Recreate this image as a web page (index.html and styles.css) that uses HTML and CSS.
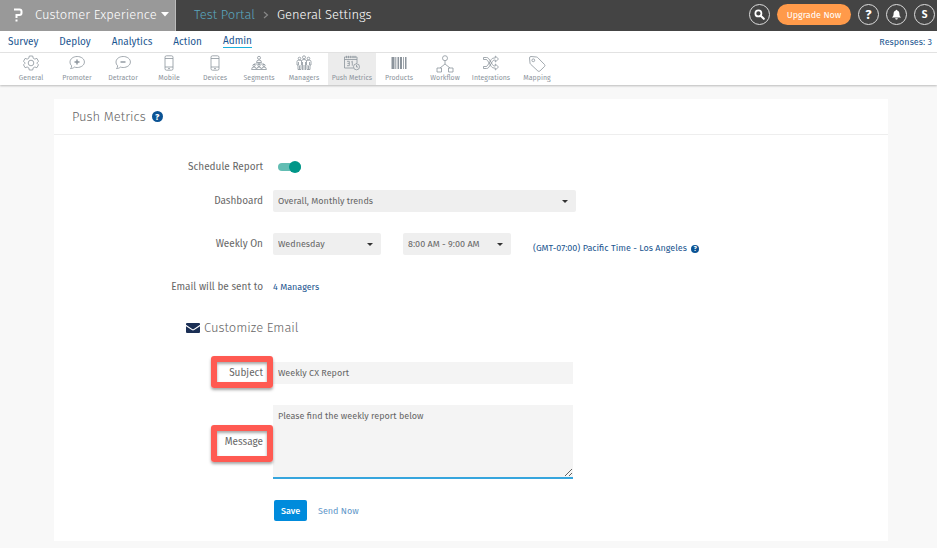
FILE: index.html
```html
<!DOCTYPE html>
<html lang="en">
<head>
    <meta charset="UTF-8">
    <meta name="viewport" content="width=device-width, initial-scale=1.0">
    <title>Push Metrics</title>
    <link rel="stylesheet" href="styles.css">
</head>
<body>
    <header class="topbar">
        <button class="product" type="button">
            <svg class="logo" viewBox="0 0 10 14"><path d="M1 1.500h5.500q2 0 2 2v1.500q0 2-2 2H3.500v3" fill="none" stroke="#fff" stroke-width="2"/><path d="M2.500 11.500h2v2h-2z" fill="#fff"/></svg>
            <span>Customer Experience</span>
            <svg class="product-caret" viewBox="0 0 8 5"><path d="M0 0h8L4 4.500z" fill="#fff"/></svg>
        </button>
        <nav class="crumbs">
            <a href="#">Test Portal</a>
            <svg class="crumb-sep" viewBox="0 0 6 8"><path d="M1 1l3.500 3L1 7" fill="none" stroke="#888" stroke-width="1.200"/></svg>
            <span>General Settings</span>
        </nav>
        <div class="tools">
            <button class="round" type="button" aria-label="Search">
                <svg viewBox="0 0 12 12"><circle cx="4.800" cy="4.800" r="3.300" fill="none" stroke="#fff" stroke-width="1.900"/><path d="M7.300 7.300l3.400 3.400" stroke="#fff" stroke-width="2.200" stroke-linecap="round"/></svg>
            </button>
            <button class="upgrade" type="button">Upgrade Now</button>
            <button class="round help" type="button">?</button>
            <button class="round" type="button" aria-label="Notifications">
                <svg viewBox="0 0 12 12"><path d="M6 .8c.6 0 .8.400.8.900C8.600 2.200 9.200 3.600 9.200 5.200c0 2 .6 3.200 1.800 4.200H1C2.200 8.400 2.800 7.200 2.800 5.200c0-1.600.6-3 2.400-3.500C5.200 1.200 5.400.8 6 .8zM4.600 10h2.800c0 .8-.6 1.400-1.400 1.400S4.600 10.800 4.600 10z" fill="#fff"/></svg>
            </button>
            <button class="round" type="button">S</button>
        </div>
    </header>

    <nav class="menu">
        <a href="#">Survey</a>
        <a href="#">Deploy</a>
        <a href="#">Analytics</a>
        <a href="#">Action</a>
        <a href="#" class="current">Admin</a>
        <a href="#" class="responses">Responses: 3</a>
    </nav>

    <nav class="submenu">
        <a href="#">
            <svg viewBox="0 0 16 16"><path d="M6.300 1h3.400l.5 2.200 1.600.9 2.100-.7 1.600 2.900L14 7.900v.4l1.500 1.500-1.600 2.900-2.100-.7-1.600.9-.5 2.100H6.300l-.5-2.100-1.600-.9-2.100.7L.5 9.800 2 8.300v-.4L.5 6.300l1.600-2.900 2.100.7 1.600-.9z"/><circle cx="8" cy="8" r="2.800"/></svg>
            General
        </a>
        <a href="#">
            <svg viewBox="0 0 16 16"><path d="M8.200 1.500c4 0 7.200 2.400 7.200 5.500s-3.200 5.500-7.200 5.500c-1 0-2-.1-2.800-.4-1.100 1-2.500 1.500-3.900 1.500.8-.7 1.200-1.700 1.100-2.900C1.500 9.700 1 8.400 1 7c0-3.100 3.200-5.500 7.200-5.500z"/><path class="bold" d="M5.500 7h5M8 4.500v5"/></svg>
            Promoter
        </a>
        <a href="#">
            <svg viewBox="0 0 16 16"><path d="M8.200 1.500c4 0 7.200 2.400 7.200 5.500s-3.200 5.500-7.200 5.500c-1 0-2-.1-2.800-.4-1.100 1-2.500 1.500-3.900 1.500.8-.7 1.200-1.700 1.100-2.900C1.500 9.700 1 8.400 1 7c0-3.100 3.200-5.500 7.200-5.500z"/><path class="bold" d="M5.500 7h5"/></svg>
            Detractor
        </a>
        <a href="#">
            <svg viewBox="0 0 16 16"><rect x="4" y=".8" width="8" height="14.400" rx="1.500"/><path d="M4 3.500h8M4 12h8M7 13.600h2"/></svg>
            Mobile
        </a>
        <a href="#">
            <svg viewBox="0 0 16 16"><rect x="4" y=".8" width="8" height="14.400" rx="1.500"/><path d="M4 3.500h8M4 12h8M7 13.600h2"/></svg>
            Devices
        </a>
        <a href="#" class="narrow">
            <svg viewBox="0 0 16 16"><circle cx="8" cy="2.800" r="1.500"/><path d="M5.500 7.500q0-2.500 2.500-2.500t2.500 2.500zM8 7.500v1.500M3 10V9h10v1"/><circle cx="3" cy="10.500" r="1.100"/><circle cx="8" cy="10.500" r="1.100"/><circle cx="13" cy="10.500" r="1.100"/><path d="M.6 14.500q0-2.500 2.400-2.500t2.400 2.500zM5.600 14.500q0-2.500 2.400-2.500t2.400 2.500zM10.600 14.500q0-2.500 2.400-2.500t2.400 2.500z"/></svg>
            Segments
        </a>
        <a href="#" class="wide">
            <svg viewBox="0 0 16 16"><circle cx="8" cy="2.300" r="1.500"/><circle cx="3.500" cy="3.500" r="1.300"/><circle cx="12.500" cy="3.500" r="1.300"/><path d="M5.500 10V6q0-1.500 2.500-1.500T10.500 6v4M6.500 7v8M9.500 7v8M8 10v5M5.500 5.500q-4.500-1-4.500 1V10h1v4.500h3V10M10.500 5.500q4.500-1 4.500 1V10h-1v4.500h-3V10M2.500 7v3M13.500 7v3M3.500 10.500v4M12.500 10.500v4"/></svg>
            Managers
        </a>
        <a href="#" class="wide current">
            <svg viewBox="0 0 16 16"><path d="M9.500 13H.5V2h12.500v6M.5 4.500H13M2.500.8v2.400M4.500.8v2.400M6.700.8v2.400M9 .8v2.400M11 .8v2.400"/><path d="M3 6.300h2.300v4.400H3M3.500 8.400h1.800M7.300 7l1-.8v4.500"/><circle cx="12.500" cy="11.800" r="3"/><path d="M12.500 8.800V8M12.500 10v2h1.500"/></svg>
            Push Metrics
        </a>
        <a href="#">
            <svg viewBox="0 0 16 16"><g class="bars"><path d="M.5 2h3v12h-3zM4.300 2h1v12h-1zM6.500 2h1.600v12H6.500zM9 2h2v12H9zM12 2h.8v12H12zM14 2h1.500v12H14z"/></g></svg>
            Products
        </a>
        <a href="#">
            <svg class="big" viewBox="0 0 18 18"><circle cx="9" cy="3.200" r="2.500"/><path d="M9 5.700V9l-5 4M9 9l5 4"/><path d="M1 13h4.500v4H1zM12.500 13H17v4h-4.500z"/></svg>
            Workflow
        </a>
        <a href="#">
            <svg viewBox="0 0 16 16"><path d="M.5 2.500h3q1.500 0 2.300 1.200l3.700 6q.8 1.300 2 1.300h.8V9l3.200 3-3.200 3v-2H11q-1.800 0-2.800-1.600l-3.500-5.700Q4.100 4.500 3 4.500H.5zM.5 13.500h3q1.500 0 2.300-1.200l3.700-6Q10.300 5 11.500 5h.8v2l3.200-3-3.200-3v2H11Q9.200 3 8.200 4.600l-3.500 5.700q-.6 1.200-1.700 1.200H.5z"/></svg>
            Integrations
        </a>
        <a href="#">
            <svg class="big" viewBox="0 0 18 18"><path d="M1.500 3q0-1.500 1.500-1.500L8.500 2q.7.100 1.200.6l6.800 6.900q.9 1 0 2l-4.600 4.500q-1 .9-2 0L2.600 9.200Q2.100 8.700 2 8z"/><circle cx="5.300" cy="5.300" r="1.400"/></svg>
            Mapping
        </a>
    </nav>

    <main class="card">
        <h1 class="card-title">Push Metrics <span class="info">?</span></h1>

        <form class="form">
            <label for="schedule">Schedule Report</label>
            <div class="field">
                <input class="switch" id="schedule" type="checkbox" checked>
            </div>

            <label for="dashboard" class="close">Dashboard</label>
            <div class="field close">
                <div class="select full">
                    <select id="dashboard"><option>Overall, Monthly trends</option></select>
                </div>
            </div>

            <label for="day" class="spaced">Weekly On</label>
            <div class="field spaced">
                <div class="select">
                    <select id="day"><option>Wednesday</option></select>
                </div>
                <div class="select">
                    <select aria-label="Time"><option>8:00 AM - 9:00 AM</option></select>
                </div>
                <a class="timezone" href="#">(GMT-07:00) Pacific Time - Los Angeles <span class="info small">?</span></a>
            </div>

            <span class="label spaced">Email will be sent to</span>
            <div class="field spaced">
                <a href="#">4 Managers</a>
            </div>

            <h2 class="section">
                <svg class="mail" viewBox="0 0 14 10"><path d="M1 0h12q1 0 1 1v.8L7.800 5.900q-.8.500-1.600 0L0 1.800V1q0-1 1-1zM0 3.200l5.800 3.900q1.200.7 2.400 0L14 3.200V9q0 1-1 1H1q-1 0-1-1z" fill="#1b2f55"/></svg>
                Customize Email
            </h2>

            <label for="subject" class="spaced marked">Subject</label>
            <div class="field spaced">
                <input class="text" id="subject" type="text" value="Weekly CX Report">
            </div>

            <label for="message" class="spaced marked tall">Message</label>
            <div class="field spaced">
                <textarea class="text" id="message">Please find the weekly report below</textarea>
            </div>

            <div class="actions spaced">
                <button class="save" type="button">Save</button>
                <a href="#">Send Now</a>
            </div>
        </form>
    </main>
</body>
</html>
```
FILE: styles.css
```css
*, *::after{
    box-sizing: border-box;
}

body{
    margin: 0px;
    min-height: 100vh;
    background-color: #f8f8f8;
    font-family: "Fira Sans", "Noto Sans", sans-serif;
    font-size: 9px;
    line-height: 12px;
    color: #666;
}

a{
    color: #1b5590;
    text-decoration: none;
}

button, input, select, textarea{
    font: inherit;
    color: inherit;
    border: none;
    margin: 0px;
}

.topbar{
    display: flex;
    align-items: stretch;
    height: 31px;
    background-color: #444;
    color: white;
    font-size: 13px;
    font-weight: 300;
    line-height: 16px;
}

.product{
    display: flex;
    align-items: center;
    width: 176px;
    padding: 0px 6px 2px 13px;
    background-color: #999;
    border-right: 1px solid #bbb;
}

.logo{
    width: 10px;
    height: 14px;
    margin-right: 12px;
}

.product-caret{
    width: 8px;
    height: 5px;
    margin-left: auto;
}

.crumbs{
    display: flex;
    align-items: center;
    gap: 8px;
    padding: 0px 0px 2px 18px;
}

.crumbs a{
    color: #5aa5bd;
}

.crumb-sep{
    width: 6px;
    height: 8px;
}

.tools{
    display: flex;
    align-items: center;
    gap: 7px;
    margin-left: auto;
    padding: 0px 2px 2px 0px;
}

.round{
    display: flex;
    align-items: center;
    justify-content: center;
    width: 21px;
    height: 21px;
    padding: 0px;
    border: 1px solid #ddd;
    border-radius: 50%;
    background: none;
    font-size: 10px;
    font-weight: bold;
}

.round svg{
    width: 11px;
    height: 11px;
}

.help{
    font-size: 13px;
}

.upgrade{
    width: 74px;
    height: 21px;
    padding: 0px;
    border-radius: 11px;
    background-color: #ff9a4a;
    font-size: 9px;
    font-weight: 400;
    line-height: 12px;
}

.menu{
    display: flex;
    align-items: center;
    gap: 21px;
    height: 22px;
    padding: 0px 5px 0px 8px;
    background-color: white;
    border-bottom: 1px solid #e6e6e6;
    font-size: 10px;
}

.menu .current{
    border-bottom: 1px solid #1ab0dc;
}

.menu .responses{
    margin-left: auto;
    font-size: 9px;
}

.submenu{
    display: flex;
    height: 32px;
    padding-left: 8px;
    background-color: white;
    box-shadow: 0px 1px 2px rgba(0, 0, 0, 0.25);
    font-size: 7px;
    line-height: 10px;
}

.submenu a{
    display: flex;
    flex-direction: column;
    align-items: center;
    justify-content: space-between;
    width: 46px;
    padding: 2px 0px 2px;
    color: #8c949c;
    white-space: nowrap;
}

.submenu .narrow{
    width: 42px;
}

.submenu .wide{
    width: 48px;
}

.submenu .current{
    background-color: #ececec;
}

.submenu svg{
    width: 16px;
    height: 16px;
    fill: none;
    stroke: #8c949c;
    stroke-width: 0.8;
}

.submenu .big{
    width: 18px;
    height: 18px;
}

.submenu .bold{
    stroke-width: 1.4;
}

.submenu .bars{
    fill: #8c949c;
    stroke: none;
}

.card{
    margin: 14px 49px 7px 54px;
    background-color: white;
}

.card-title{
    display: flex;
    align-items: center;
    gap: 6px;
    height: 36px;
    margin: 0px;
    padding-left: 18px;
    border-bottom: 1px solid #eee;
    font-size: 13px;
    font-weight: 300;
}

.info{
    display: inline-flex;
    align-items: center;
    justify-content: center;
    width: 11px;
    height: 11px;
    border-radius: 50%;
    background-color: #0b5394;
    color: white;
    font-size: 9px;
    font-weight: bold;
}

.info.small{
    width: 8px;
    height: 8px;
    margin-left: 2px;
    font-size: 7px;
    line-height: 8px;
}

.form{
    display: grid;
    grid-template-columns: 209px 1fr;
    column-gap: 10px;
    align-items: center;
    padding: 21px 0px 20px;
}

.form label, .label{
    justify-self: end;
    font-size: 10px;
    line-height: 22px;
}

.field{
    display: flex;
    align-items: center;
    gap: 22px;
    min-height: 22px;
}

.close{
    margin-top: 12px;
}

.spaced{
    margin-top: 21px;
}

.switch{
    appearance: none;
    position: relative;
    width: 23px;
    height: 8px;
    margin-left: 5px;
    border-radius: 4px;
    background-color: #62bdb3;
}

.switch::after{
    content: "";
    position: absolute;
    top: -2px;
    right: 0px;
    width: 12px;
    height: 12px;
    border-radius: 50%;
    background-color: #009688;
}

.switch:not(:checked)::after{
    right: auto;
    left: 0px;
}

.select{
    position: relative;
    width: 108px;
}

.select.full{
    width: 303px;
}

.select select{
    appearance: none;
    display: block;
    width: 100%;
    height: 22px;
    padding: 0px 5px;
    border-radius: 2px;
    background-color: #efefef;
}

.select::after{
    content: "";
    position: absolute;
    top: 10px;
    right: 8px;
    border: 3px solid transparent;
    border-top-color: #333;
    border-bottom: none;
    pointer-events: none;
}

.timezone{
    padding-top: 7px;
}

.section{
    grid-column: 1 / -1;
    display: flex;
    align-items: center;
    gap: 4px;
    margin: 20px 0px 3px;
    padding-left: 132px;
    font-size: 13px;
    font-weight: 300;
    line-height: 20px;
}

.mail{
    width: 14px;
    height: 10px;
}

.text{
    width: 300px;
    height: 22px;
    padding: 0px 5px;
    background-color: #f4f4f4;
}

textarea.text{
    height: 74px;
    padding-top: 5px;
    border-bottom: 2px solid #36a5dd;
    resize: vertical;
    outline: none;
}

.marked{
    position: relative;
}

.marked::after{
    content: "";
    position: absolute;
    top: -6px;
    right: -10px;
    width: 62px;
    height: 32px;
    border: 6px solid #ff5a52;
    border-radius: 3px;
    box-shadow: 0px 2px 3px rgba(0, 0, 0, 0.35), inset 0px 2px 3px rgba(0, 0, 0, 0.35);
}

.marked.tall::after{
    height: 37px;
}

.actions{
    grid-column: 2;
    display: flex;
    align-items: center;
    gap: 11px;
    padding-left: 1px;
}

.actions a{
    color: #5f97c9;
}

.save{
    width: 33px;
    height: 21px;
    padding: 0px;
    border-radius: 2px;
    background-color: #008bdc;
    color: white;
    font-weight: 500;
}
```
